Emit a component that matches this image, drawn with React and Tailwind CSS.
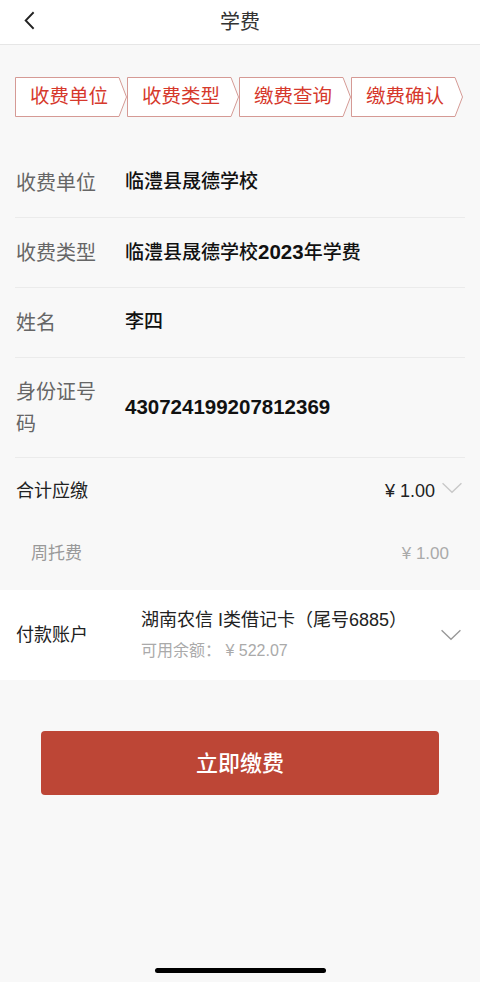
import React from 'react';

const steps = ['收费单位', '收费类型', '缴费查询', '缴费确认'];

const rows = [
  { label: '收费单位', value: ['临澧县晟德学校'], h: 'h-[70px]' },
  { label: '收费类型', value: ['临澧县晟德学校', '2023', '年学费'], h: 'h-[70px]' },
  { label: '姓名', value: ['李四'], h: 'h-[70px]' },
  { label: '身份证号码', value: ['', '430724199207812369'], h: 'h-[100px]', wrap: true },
];

function Chevron({ className }) {
  return (
    <svg viewBox="0 0 24 14" className={className} fill="none" stroke="currentColor" strokeWidth="1.6">
      <path d="M1 1.5 L12 12 L23 1.5" />
    </svg>
  );
}

function Step({ label }) {
  return (
    <div className="relative w-[112px] h-[40px] flex items-center justify-center">
      <svg viewBox="0 0 112 40" className="absolute inset-0 w-full h-full">
        <polygon points="0.5,0.5 104,0.5 111.5,20 104,39.5 0.5,39.5" fill="#ffffff" stroke="#d59a95" strokeWidth="1" />
      </svg>
      <span className="relative text-[19.5px] text-[#d6392c] pr-1 leading-none">{label}</span>
    </div>
  );
}

export default function App() {
  return (
    <div
      className="w-[480px] h-[982px] bg-[#f8f8f8] flex flex-col"
      style={{ fontFamily: '"Liberation Sans", "Noto Sans CJK SC", sans-serif' }}
    >
      {/* header */}
      <div className="h-[45px] bg-white border-b border-[#e6e6e6] flex items-center relative shrink-0">
        <svg viewBox="0 0 12 20" className="absolute left-[24px] top-[11px] w-[11px] h-[19px]" fill="none" stroke="#222" strokeWidth="2">
          <path d="M10.5 1 L1.8 10 L10.5 19" />
        </svg>
        <div className="w-full text-center text-[20px] text-[#333]">学费</div>
      </div>

      {/* steps */}
      <div className="flex pl-[15px] pt-[32px]">
        {steps.map(s => (
          <Step key={s} label={s} />
        ))}
      </div>

      {/* info rows */}
      <div className="mt-[31px] px-[15px]">
        {rows.map(r => (
          <div key={r.label} className={`${r.h} flex items-center border-b border-[#ebebeb]`}>
            <div className={`pl-[1px] text-[20px] text-[#666] leading-[32px] ${r.wrap ? 'w-[84px] mr-[26px]' : 'w-[110px]'}`}>
              {r.label}
            </div>
            <div className="text-[19px] font-medium text-[#111]">
              {r.value.map((v, i) =>
                i % 2 === 1 ? (
                  <span key={i} className="font-bold text-[20.5px]">{v}</span>
                ) : (
                  <span key={i}>{v}</span>
                )
              )}
            </div>
          </div>
        ))}
      </div>

      {/* totals */}
      <div className="h-[66px] flex items-center justify-between pl-[16px] pr-[17px]">
        <span className="text-[18px] text-[#222]">合计应缴</span>
        <div className="flex items-center">
          <span className="text-[18px] text-[#222]">¥ 1.00</span>
          <Chevron className="w-[22px] h-[12px] ml-[6px] -mt-[6px] text-[#c8c8c8]" />
        </div>
      </div>
      <div className="h-[60px] flex items-center justify-between pl-[31px] pr-[31px] mb-[6px]">
        <span className="text-[17px] text-[#999]">周托费</span>
        <span className="text-[17px] text-[#aaa]">¥ 1.00</span>
      </div>

      {/* account */}
      <div className="bg-white h-[90px] flex items-center pl-[16px] pr-[18px]">
        <span className="w-[125px] text-[18px] text-[#222]">付款账户</span>
        <div className="flex-1 flex flex-col gap-[5px]">
          <span className="text-[18px] text-[#222]">湖南农信 I类借记卡（尾号6885）</span>
          <span className="text-[16px] text-[#aaa]">可用余额： ¥ 522.07</span>
        </div>
        <Chevron className="w-[22px] h-[12px] text-[#999]" />
      </div>

      {/* button */}
      <div className="px-[41px] mt-[51px]">
        <button className="w-full h-[64px] rounded-[4px] bg-[#bd4636] text-white text-[22px] font-medium">
          立即缴费
        </button>
      </div>

      <div className="flex-1" />
      <div className="flex justify-center pb-[9px]">
        <div className="w-[171px] h-[5px] rounded-full bg-black" />
      </div>
    </div>
  );
}
